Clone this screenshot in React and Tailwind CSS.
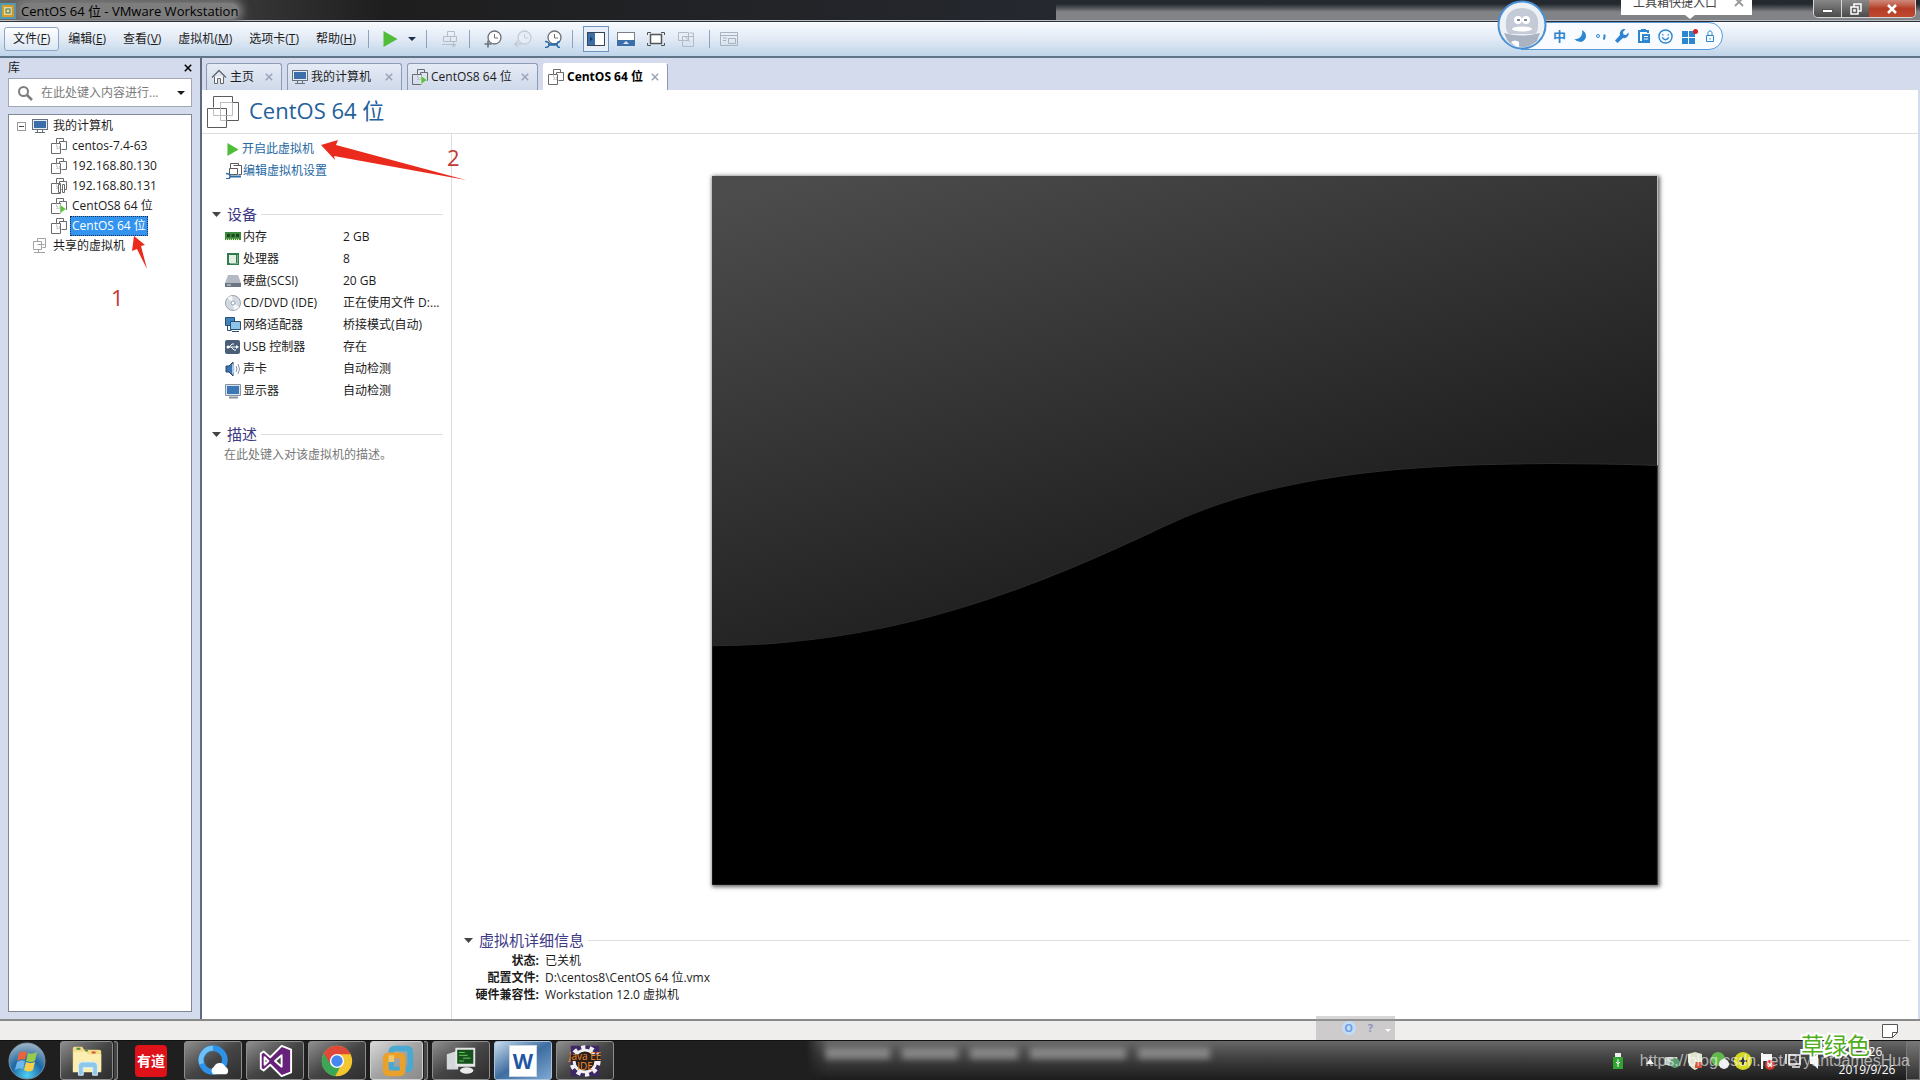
import React from 'react';

const MENUS = [
  { label: '文件', key: 'F', active: true },
  { label: '编辑', key: 'E' },
  { label: '查看', key: 'V' },
  { label: '虚拟机', key: 'M' },
  { label: '选项卡', key: 'T' },
  { label: '帮助', key: 'H' },
];

const MACHINES = [
  { name: 'centos-7.4-63', state: 'off' },
  { name: '192.168.80.130', state: 'off' },
  { name: '192.168.80.131', state: 'paused' },
  { name: 'CentOS8 64 位', state: 'on' },
  { name: 'CentOS 64 位', state: 'off', selected: true },
];

const DEVICES = [
  { icon: 'memory', name: '内存', value: '2 GB' },
  { icon: 'cpu', name: '处理器', value: '8' },
  { icon: 'disk', name: '硬盘(SCSI)', value: '20 GB' },
  { icon: 'cd', name: 'CD/DVD (IDE)', value: '正在使用文件 D:...' },
  { icon: 'network', name: '网络适配器', value: '桥接模式(自动)' },
  { icon: 'usb', name: 'USB 控制器', value: '存在' },
  { icon: 'sound', name: '声卡', value: '自动检测' },
  { icon: 'display', name: '显示器', value: '自动检测' },
];

const DETAILS = [
  ['状态:', '已关机'],
  ['配置文件:', 'D:\\centos8\\CentOS 64 位.vmx'],
  ['硬件兼容性:', 'Workstation 12.0 虚拟机'],
];

/* ---------- icons ---------- */

function VmIcon({ state = 'off', className = 'size-4' }) {
  return (
    <svg viewBox="0 0 16 16" className={`shrink-0 ${className}`} fill="none" stroke="#6b6b6b">
      <path d="M5.500 5.500v-5h7v3" />
      <path d="M8.500 3.500h7v8h-5" />
      <path d="M8.500 3.500v2" />
      <path d="M.5 5.500h9v10h-9z" />
      <path d="M5.500 5.500v3.500h4M5.500 10.500h4" stroke="#a5a5a5" strokeDasharray="1 1" />
      {state === 'on' && <path d="M9 6.500 15 11l-6 4.500z" fill="#5cc040" stroke="#fff" strokeWidth=".5" />}
      {state === 'paused' && <path d="M7.500 6.500h2v8h-2zM11.500 6.500h2v8h-2z" fill="#fff" />}
    </svg>
  );
}

function VmOutline({ className = 'size-4', color = '#5b5b5b' }) {
  return (
    <svg viewBox="0 0 32 32" className={`shrink-0 ${className}`} fill="none" stroke={color}>
      <path d="M6.500 11.500V.5h19v6" />
      <path d="M13.500 6.500h18v18h-12" />
      <path d="M.5 12.500h19v19H.5z" />
      <path d="M6.500 12.500v7h13M13.500 6.500v18h6M13.500 6.500h12v13h-6" stroke="#bdbdbd" />
    </svg>
  );
}

function MonitorIcon({ className = 'size-4' }) {
  return (
    <svg viewBox="0 0 16 16" className={`shrink-0 ${className}`}>
      <rect x=".5" y="1.500" width="15" height="10" fill="#e8edf3" stroke="#66717d" />
      <rect x="2" y="3" width="12" height="7" fill="#3c6ea9" />
      <path d="M5 12h1v2H5zM10 12h1v2h-1zM3 14h10v1H3z" fill="#66717d" />
    </svg>
  );
}

function SharedIcon() {
  return (
    <svg viewBox="0 0 16 16" className="size-4 shrink-0" fill="none" stroke="#a2a2a2">
      <path d="M5.500 3.500v-3h8v9h-3M1.500 3.500h8v8h-8zM5.500 6.500h7M6.500 11.500v3M2 14.500h11" />
    </svg>
  );
}

function HomeIcon() {
  return (
    <svg viewBox="0 0 16 16" className="size-4 shrink-0" fill="#f6f8fb" stroke="#666">
      <path d="M3.500 7.500v7h3v-5h3v5h3v-7" />
      <path d="M1 8.500 8 1.500l7 7" fill="none" strokeWidth="1.400" />
    </svg>
  );
}

function CloseX({ className = 'size-2' }) {
  return (
    <svg viewBox="0 0 8 8" className={`shrink-0 ${className}`} fill="none" stroke="currentColor" strokeWidth="1.500">
      <path d="m.8.8 6.400 6.400M7.200.8.8 7.200" />
    </svg>
  );
}

function Caret({ className = 'h-1 w-2' }) {
  return (
    <svg viewBox="0 0 8 4" preserveAspectRatio="none" className={`shrink-0 ${className}`} fill="currentColor">
      <path d="M0 0h8L4 4z" />
    </svg>
  );
}

function ClockIcon({ kind }) {
  const faded = kind === 'back';
  const ink = faded ? '#c3cbd6' : '#6c7178';
  return (
    <svg viewBox="0 0 18 18" className="size-[18px]" fill="none" stroke={ink}>
      <circle cx="10.500" cy="7.500" r="6.500" fill={faded ? '#e6edf6' : '#fff'} strokeWidth="1.300" />
      <path d="M10.500 4v4h3.500" />
      {kind === 'add' && <path d="M.5 14h7M4 10.500v7" stroke="#6c7178" strokeWidth="1.600" />}
      {kind === 'back' && <path d="M8 14H1.500M4 11l-3 3 3 3" strokeWidth="1.600" />}
      {kind === 'manage' && (
        <g stroke="#2f6da6">
          <path d="M4 14.500h9" strokeWidth="2.500" />
          <path d="M1 11.500q4 0 4 3t-4 3M16 11.500q-3 0-3 3t3 3" strokeWidth="1.500" />
        </g>
      )}
    </svg>
  );
}

function ToolIcon({ name }) {
  const icons = {
    send: (
      <g stroke="#b7bdc6" fill="none">
        <path d="M6.500 6.500v-5h7v5M2.500 6.500h7v5h-7zM9.500 6.500h6v5h-6zM1 14.500h14M12.500 12v5M10.500 15l2 2 2-2" />
      </g>
    ),
    library: (
      <g>
        <rect x=".5" y="2.500" width="17" height="13" fill="#fff" stroke="#3a4550" />
        <path d="M1 3h7v12H1z" fill="#3c6ea9" />
        <path d="M3 6.500v5L6 9z" fill="#163b66" />
      </g>
    ),
    thumbs: (
      <g>
        <rect x=".5" y="2.500" width="17" height="13" fill="#fff" stroke="#77818c" />
        <path d="M0 10h18v6H0z" fill="#3c6ea9" />
        <path d="M6 14h6l-3-3z" fill="#dce8f5" />
      </g>
    ),
    full: (
      <g fill="none" stroke="#555">
        <path d="M3.500 4.500h11v9h-11z" fill="#fff" strokeWidth="1.500" />
        <path d="M.5 5V2.500H4M14 2.500h3.500V5M17.500 13v2.500H14M4 15.500H.5V13" />
      </g>
    ),
    unity: (
      <g fill="none" stroke="#b3bac4">
        <path d="M1.500 2.500h10v8h-10zM5.500 6.500h11v10h-11zM8 6l5 6M12.500 3h4v4" />
      </g>
    ),
    console: (
      <g fill="none" stroke="#a9b1bc">
        <path d="M.5 2.500h17v13H.5zM.5 5.500h17M3 8h4M3 10.500h3M8.500 8.500h7v5h-7z" />
      </g>
    ),
  };
  return (
    <svg viewBox="0 0 18 18" className="size-[18px]">
      {icons[name]}
    </svg>
  );
}

function DeviceIcon({ name }) {
  const icons = {
    memory: (
      <g>
        <path d="M0 3h16v8H0z" fill="#3c8a3e" />
        <path d="M2 5h3v3H2zM6.500 5h3v3h-3zM11 5h3v3h-3z" fill="#1d4420" />
        <path d="M1 10.500h14" stroke="#d9e5a0" strokeWidth="1.500" strokeDasharray="1 1" />
      </g>
    ),
    cpu: (
      <g>
        <path d="M2 2h12v12H2z" fill="#2f7d4d" />
        <path d="M4 4h7v8H4z" fill="#e3eee5" />
        <path d="M11 4h1v8H5v1h8V4z" fill="#7fb18d" />
      </g>
    ),
    disk: (
      <g>
        <path d="M3 2h10l3 8H0z" fill="#b3bac4" />
        <path d="M0 10h16v4H0z" fill="#6c7683" />
        <path d="M2 12h4" stroke="#dbe1e9" />
      </g>
    ),
    cd: (
      <g>
        <circle cx="8" cy="8" r="7.500" fill="#d3dae2" stroke="#98a3b0" />
        <path d="M8 8 2.500 3A7 7 0 0 1 7 1zM8 8l6 4a7 7 0 0 1-5 3z" fill="#f7f9fb" />
        <circle cx="8" cy="8" r="2" fill="#fff" stroke="#98a3b0" />
      </g>
    ),
    network: (
      <g>
        <path d="M.5.5h9v8h-9z" fill="#3f83bd" stroke="#2a4f74" />
        <path d="M5.500 4.500h10v8h-10z" fill="#8fc5e8" stroke="#2a4f74" />
        <path d="M7 14.500h7M2.500 9v4.500h4" stroke="#2a4f74" fill="none" />
      </g>
    ),
    usb: (
      <g>
        <rect x="0" y="1" width="15" height="14" rx="2" fill="#4a5e78" />
        <path d="M2 8h10M4 8l3-3h2M6 8l3 3h2" stroke="#fff" fill="none" />
        <circle cx="3" cy="8" r="1.500" fill="#fff" />
        <path d="m11 6 3 2-3 2z" fill="#fff" />
      </g>
    ),
    sound: (
      <g>
        <path d="M1 5h3l4-4v14l-4-4H1z" fill="#3c73ae" stroke="#27486c" />
        <path d="M7 2q5 6 0 12z" fill="#a9c9e6" />
        <path d="M11 5q2 3 0 6M13 3q3 5 0 10" stroke="#8596a8" fill="none" />
      </g>
    ),
    display: (
      <g>
        <path d="M.5 1.500h15v11H.5z" fill="#dbe2ea" stroke="#8592a1" />
        <path d="M2 3h12v8H2z" fill="#3c78b8" />
        <path d="M4 14.500h9" stroke="#8592a1" strokeWidth="2" />
      </g>
    ),
  };
  return (
    <svg viewBox="0 0 16 16" className="size-4 shrink-0">
      {icons[name]}
    </svg>
  );
}

function AppIcon({ name }) {
  const icons = {
    explorer: (
      <g>
        <path d="M4 6q0-2 2-2h8l2 3h16q2 0 2 2v20H4z" fill="#f3dc84" />
        <path d="M5 9h13l2 3h14v19H4z" fill="#fbeeb0" />
        <path d="M8 5h4v2H8zM17 7h3v2h-3z" fill="#4f8c4a" />
        <path d="M24 9h4v2h-4z" fill="#c8523c" />
        <path d="M10 34V24q0-4 4-4h12q4 0 4 4v10h-5v-8H15v8z" fill="#8fc7ea" stroke="#d8effb" />
      </g>
    ),
    browser: (
      <g>
        <circle cx="19" cy="18" r="12.500" fill="none" stroke="#2e93e8" strokeWidth="6" />
        <path d="M7 22A12.500 12.500 0 0 1 19 5.500" fill="none" stroke="#6fc0f5" strokeWidth="5" />
        <path d="M19 33a5 5 0 0 1 1-8 6.500 6.500 0 0 1 12 0 4.500 4.500 0 0 1 1 8z" fill="#fff" />
      </g>
    ),
    vs: (
      <path
        d="M26 3 36 7v24l-10 4-12-12-7 6-3-2V11l3-2 7 6zM8 15v8l4-4zM26 13l-7 6 7 6z"
        fill="#68217a"
        stroke="#fff"
        strokeWidth="2"
        strokeLinejoin="round"
      />
    ),
    chrome: (
      <g>
        <circle cx="19" cy="19" r="16" fill="#f4c62f" />
        <path d="M19 19 5.100 11A16 16 0 0 0 17 35l6-11z" fill="#3aa757" />
        <path d="M19 12h14.400A16 16 0 0 0 5.100 11L12.500 23z" fill="#e0483a" />
        <circle cx="19" cy="19" r="7.500" fill="#fff" />
        <circle cx="19" cy="19" r="6" fill="#4688ef" />
      </g>
    ),
    vmware: (
      <g fill="none" strokeWidth="6">
        <rect x="13" y="6" width="20" height="22" rx="3" stroke="#49a9d0" />
        <rect x="7" y="13" width="18" height="19" rx="3" stroke="#e9a12c" />
        <path d="M13 20v-7" stroke="#f6c566" />
      </g>
    ),
    terminal: (
      <g>
        <path d="M4 12 16 8v20H4z" fill="#d5d8da" />
        <path d="M13 5h21v20H13z" fill="#e4e6e5" />
        <path d="M15 7h17v15H15z" fill="#16501d" />
        <path d="M17 10h6M17 13h9M21 16h8M17 19h5" stroke="#68d35f" />
        <ellipse cx="25" cy="29" rx="7" ry="3.500" fill="#e9eaea" />
      </g>
    ),
    eclipse: (
      <g>
        <path d="M4 3h30v32H4z" fill="#3d2865" />
        <circle cx="19" cy="19" r="11.500" fill="#2a211f" stroke="#f1f1f1" strokeWidth="3" />
        <circle cx="19" cy="19" r="14.500" fill="none" stroke="#f1f1f1" strokeWidth="4" strokeDasharray="4.500 4.610" />
        <path d="M3 12h32v7H3z" fill="#2a211f" />
      </g>
    ),
  };
  return (
    <svg viewBox="0 0 38 38" className="size-[36px]">
      {icons[name]}
    </svg>
  );
}

/* ---------- window chrome ---------- */

function TitleBar() {
  return (
    <header className="flex h-[21px] shrink-0 items-start justify-between border-b border-[#b9bdc4] bg-linear-to-r from-[#666] via-[#1e1e1e] via-20% to-[#25282f] to-55%">
      <div className="flex h-5 items-center gap-1 pt-px text-black">
        <svg viewBox="0 0 16 16" className="size-4" fill="none" strokeWidth="2">
          <rect x="1" y="1" width="14" height="14" stroke="#4f9db5" />
          <rect x="3" y="3" width="10" height="10" fill="#e7d9a0" stroke="#d99c2b" />
          <rect x="6" y="6" width="4" height="4" stroke="#3f7f4f" strokeWidth="1" />
        </svg>
        <h1 className="rounded-full bg-[#7d7d7d] px-px text-[13px] leading-4 shadow-[0_0_8px_4px_#7d7d7d]">
          CentOS 64 位 - VMware Workstation
        </h1>
      </div>
      <div className="flex h-5 w-[45%] justify-end bg-linear-to-b from-[#23292e] from-20% to-[#828387] to-60% pr-1">
        <div className="flex h-[18px] overflow-hidden rounded-b-[5px] border border-t-0 border-[#d6d6d6]">
          <button type="button" aria-label="最小化" className="flex w-7 items-center justify-center border-r border-[#d6d6d6] bg-linear-to-b from-[#888] to-[#4b4b4b]">
            <span className="mt-1 h-1 w-[11px] border border-[#555] bg-white" />
          </button>
          <button type="button" aria-label="还原" className="flex w-[27px] items-center justify-center bg-linear-to-b from-[#888] to-[#4b4b4b]">
            <svg viewBox="0 0 12 12" className="size-3" fill="none" stroke="#fff" strokeWidth="1.500">
              <path d="M4 3.500V1h7v7H8.500M1 4h7v7H1zM4 7h1v1H4z" />
            </svg>
          </button>
          <button type="button" aria-label="关闭" className="flex w-[46px] items-center justify-center bg-linear-to-b from-[#cf8a7c] via-[#b53c25] to-[#c04a30] text-white">
            <svg viewBox="0 0 12 12" className="size-3" stroke="#fff" strokeWidth="2.500">
              <path d="m2 2 8 8M10 2l-8 8" />
            </svg>
          </button>
        </div>
      </div>
    </header>
  );
}

function Separator({ className }) {
  return <span className={`h-[18px] w-px bg-[#8ba3c0] ${className}`} />;
}

function ToolButton({ label, active, children }) {
  return (
    <button
      type="button"
      aria-label={label}
      className={`mx-0.5 flex h-[26px] w-[26px] items-center justify-center ${active ? 'border border-[#6f93bf] bg-[#e6effa]' : ''}`}
    >
      {children}
    </button>
  );
}

function MenuBar() {
  return (
    <nav className="flex h-[37px] shrink-0 items-center border-t border-b-2 border-t-[#2c3038] border-b-[#5f7487] bg-linear-to-b from-[#f8fbff] via-[#e2eaf5] to-[#bfd5e9] pl-1">
      <div className="flex gap-px">
        {MENUS.map((menu) => (
          <button
            key={menu.label}
            type="button"
            className={`flex h-6 items-center px-2 ${menu.active ? 'rounded-[3px] border border-[#8ba6c9] bg-linear-to-b from-white to-[#dbe6f3]' : ''}`}
          >
            {menu.label}(<u>{menu.key}</u>)
          </button>
        ))}
      </div>
      <Separator className="ml-1" />
      <button type="button" aria-label="启动" className="ml-3.5 flex items-center">
        <svg viewBox="0 0 14 16" className="h-4 w-[15px]">
          <path d="M0 0v16l14-8z" fill="#4fbd38" />
        </svg>
      </button>
      <button type="button" aria-label="电源选项" className="ml-2.5 text-[#1c2f52]">
        <Caret />
      </button>
      <Separator className="mr-2 ml-2.5" />
      <ToolButton label="发送 Ctrl+Alt+Del"><ToolIcon name="send" /></ToolButton>
      <Separator className="mr-2 ml-1" />
      <ToolButton label="拍摄快照"><ClockIcon kind="add" /></ToolButton>
      <ToolButton label="恢复快照"><ClockIcon kind="back" /></ToolButton>
      <ToolButton label="管理快照"><ClockIcon kind="manage" /></ToolButton>
      <Separator className="mr-2 ml-1" />
      <ToolButton label="显示库" active><ToolIcon name="library" /></ToolButton>
      <ToolButton label="缩略图栏"><ToolIcon name="thumbs" /></ToolButton>
      <ToolButton label="全屏"><ToolIcon name="full" /></ToolButton>
      <ToolButton label="Unity"><ToolIcon name="unity" /></ToolButton>
      <Separator className="mr-1 ml-2" />
      <ToolButton label="控制台视图"><ToolIcon name="console" /></ToolButton>
    </nav>
  );
}

/* ---------- library ---------- */

function Library() {
  return (
    <aside className="flex w-[202px] shrink-0 flex-col border-r-2 border-[#5d6b80] bg-[#d3dbec] pr-2 pb-[7px] pl-2">
      <div className="flex h-5 items-center justify-between">
        <h2>库</h2>
        <button type="button" aria-label="关闭库" className="text-black">
          <CloseX />
        </button>
      </div>
      <div className="flex h-[29px] items-center gap-2 border border-[#a0a7b5] bg-white pr-1.5 pl-2">
        <svg viewBox="0 0 16 16" className="size-4 shrink-0" fill="none" stroke="#7d7d7d">
          <circle cx="6.500" cy="6.500" r="4.500" strokeWidth="2" />
          <path d="m10 10 5 5" strokeWidth="2.500" />
        </svg>
        <input
          type="text"
          aria-label="搜索库"
          placeholder="在此处键入内容进行..."
          className="min-w-0 flex-1 bg-transparent outline-none placeholder:text-[#7b7b7b]"
        />
        <button type="button" aria-label="搜索选项">
          <Caret />
        </button>
      </div>
      <div className="mt-[7px] flex-1 border border-[#7f8897] bg-white pt-px">
        <div className="flex h-5 items-center pl-2">
          <button type="button" aria-label="折叠" className="mr-1.5 flex size-[9px] items-center justify-center border border-[#999]">
            <span className="h-px w-[5px] bg-[#444]" />
          </button>
          <MonitorIcon />
          <span className="ml-[5px]">我的计算机</span>
        </div>
        <ul>
          {MACHINES.map((machine) => (
            <li key={machine.name} className="flex h-5 items-center gap-[3px] pl-[42px]">
              <VmIcon state={machine.state} />
              <button
                type="button"
                className={`h-5 border px-px ${machine.selected ? 'border-dotted border-[#16304f] bg-[#3394f0] text-white' : 'border-transparent'}`}
              >
                {machine.name}
              </button>
            </li>
          ))}
        </ul>
        <div className="flex h-5 items-center gap-[5px] pl-[23px]">
          <SharedIcon />
          <span>共享的虚拟机</span>
        </div>
      </div>
    </aside>
  );
}

/* ---------- main area ---------- */

function Tab({ icon, label, width, active }) {
  return (
    <div
      className={`flex h-[27px] items-center rounded-t-[3px] border border-b-0 pr-2 pl-1 ${width} ${
        active ? 'border-white border-r-[#8c9ab5] bg-white font-bold text-black' : 'border-[#8c9ab5] bg-linear-to-b from-[#e6ecf6] to-[#cfd9ea]'
      }`}
    >
      <button type="button" role="tab" aria-selected={!!active} className="flex flex-1 items-center gap-[3px] whitespace-nowrap">
        {icon}
        {label}
      </button>
      <button type="button" aria-label={`关闭 ${label}`} className="text-[#98a4b6]">
        <CloseX />
      </button>
    </div>
  );
}

function SectionTitle({ children }) {
  return (
    <div className="flex h-5 items-center">
      <span className="mr-1.5 flex text-[#444]">
        <Caret className="h-[5px] w-[9px]" />
      </span>
      <h3 className="text-[15px] leading-5 text-[#3e3a86]">{children}</h3>
      <span className="ml-1 h-px flex-1 bg-[#dedede]" />
    </div>
  );
}

function Summary() {
  return (
    <section className="w-[250px] shrink-0 border-r border-[#dcdcdc] pr-2">
      <div className="flex flex-col pt-1 pl-6 text-[#2468a4]">
        <a href="#start" className="flex h-[22px] items-center gap-[3px]">
          <svg viewBox="0 0 12 14" className="ml-px h-[13px] w-3">
            <path d="M0 0v14l12-7z" fill="#4fbd38" />
          </svg>
          开启此虚拟机
        </a>
        <a href="#settings" className="flex h-[21px] items-center gap-px">
          <svg viewBox="0 0 16 16" className="size-4" fill="none" stroke="#5b5b5b">
            <path d="M4.500 5V.5h8v2M7.500 2.500h8v9h-3M3.500 5.500h8v6h-8z" />
            <path d="M4 13.500h11" stroke="#2f6da6" strokeWidth="2" />
            <path d="M0 10.500q4 0 4 3t-4 2" stroke="#2f6da6" strokeWidth="1.500" />
          </svg>
          编辑虚拟机设置
        </a>
      </div>
      <div className="pt-[23px] pl-[10px]">
        <SectionTitle>设备</SectionTitle>
        <table className="ml-[13px] mt-0.5">
          <tbody>
            {DEVICES.map((device) => (
              <tr key={device.name} className="h-[22px]">
                <td className="w-[118px] p-0">
                  <div className="flex items-center gap-0.5 whitespace-nowrap">
                    <DeviceIcon name={device.icon} />
                    {device.name}
                  </div>
                </td>
                <td className="p-0 whitespace-nowrap">{device.value}</td>
              </tr>
            ))}
          </tbody>
        </table>
        <div className="h-[22px]" />
        <SectionTitle>描述</SectionTitle>
        <p className="pl-3 leading-[22px] text-[#777]">在此处键入对该虚拟机的描述。</p>
      </div>
    </section>
  );
}

function ConsolePreview() {
  return (
    <div className="flex min-h-0 flex-1 items-center justify-center pt-[42px] pb-[45px]">
      <svg viewBox="0 0 944 708" className="aspect-[944/708] h-full shadow-[1px_1px_4px_1px_rgba(0,0,0,0.6)]">
        <defs>
          <linearGradient id="sheen" x1="0.1" y1="0" x2="0.35" y2="0.62">
            <stop offset="0" stopColor="#4c4c4c" />
            <stop offset="1" stopColor="#1f1f1f" />
          </linearGradient>
        </defs>
        <rect width="944" height="708" fill="url(#sheen)" />
        <path d="M0 469C180 469 320 412 451 350 560 298 700 281 944 289V708H0z" fill="#000" stroke="#2c2c2c" />
      </svg>
    </div>
  );
}

function Workspace() {
  return (
    <main className="flex min-w-0 flex-1 flex-col bg-white">
      <div role="tablist" className="flex h-8 shrink-0 items-end gap-[5px] bg-[#d3dbec] pl-1">
        <Tab width="w-[76px]" icon={<HomeIcon />} label="主页" />
        <Tab width="w-[115px]" icon={<MonitorIcon />} label="我的计算机" />
        <Tab width="w-[131px]" icon={<VmIcon state="on" />} label="CentOS8 64 位" />
        <Tab width="w-[125px]" icon={<VmIcon />} label="CentOS 64 位" active />
      </div>
      <div className="flex h-11 shrink-0 items-center gap-[10px] border-b border-[#dcdcdc] pl-[5px]">
        <VmOutline className="size-8" />
        <h2 className="pb-1 text-[22px] text-[#24609a]">CentOS 64 位</h2>
      </div>
      <div className="flex min-h-0 flex-1">
        <Summary />
        <section className="flex min-w-0 flex-1 flex-col">
          <ConsolePreview />
          <div className="pr-2 pb-4 pl-3">
            <SectionTitle>虚拟机详细信息</SectionTitle>
            <dl className="mt-0.5 grid grid-cols-[75px_1fr] gap-x-1.5 leading-[17px]">
              {DETAILS.map(([term, value]) => (
                <React.Fragment key={term}>
                  <dt className="text-right font-bold">{term}</dt>
                  <dd>{value}</dd>
                </React.Fragment>
              ))}
            </dl>
          </div>
        </section>
      </div>
    </main>
  );
}

function StatusBar() {
  return (
    <footer className="flex h-[21px] shrink-0 items-center justify-end border-t-2 border-[#8a8a8a] bg-[#f0eded] pr-[22px]">
      <svg viewBox="0 0 16 14" className="h-[14px] w-4" fill="#fff" stroke="#555">
        <path d="M.5.5h15v8l-5 5H.5zM10.500 13.500v-5h5" />
      </svg>
    </footer>
  );
}

/* ---------- desktop ---------- */

function TaskButton({ label, tone = 'dark', stacked, children }) {
  const tones = {
    dark: 'border-[#8d8d8d] from-[#8f8f8f] via-[#454545] to-[#2e2e2e]',
    light: 'border-[#d0d0d0] from-[#d8d8d8] via-[#a3a3a3] to-[#8b8b8b]',
    blue: 'border-[#a9c4e0] from-[#c9dcec] via-[#3f6da0] to-[#7fa9d3]',
    plain: 'border-transparent',
  };
  return (
    <div className="flex h-[39px] w-[58px] gap-px">
      <button
        type="button"
        aria-label={label}
        className={`flex min-w-0 flex-1 items-center justify-center overflow-hidden rounded-[3px] border bg-linear-to-br ${tones[tone]}`}
      >
        {children}
      </button>
      {stacked && <span className="w-1 rounded-r-[3px] border border-l-0 border-[#8d8d8d] bg-[#444]" />}
    </div>
  );
}

function StartOrb() {
  return (
    <button type="button" aria-label="开始" className="mr-[10px] ml-2 size-[38px]">
      <svg viewBox="0 0 38 38">
        <defs>
          <radialGradient id="orb" cx=".5" cy=".9" r=".9">
            <stop offset="0" stopColor="#4fd0f5" />
            <stop offset=".5" stopColor="#1b68a5" />
            <stop offset="1" stopColor="#a3b6c4" />
          </radialGradient>
        </defs>
        <circle cx="19" cy="19" r="18" fill="url(#orb)" stroke="#7792a5" />
        <path d="M11 11q4-3 8-1l-2 8q-4-2-8 1z" fill="#e8643b" />
        <path d="M20 11q4 2 9-1l-2 9q-4 2-9 0z" fill="#9aca4b" />
        <path d="M9 20q4-3 8-1l-2 8q-4-2-8 1z" fill="#6fb7ea" />
        <path d="M18 20q4 2 9 0l-2 8q-4 3-9 0z" fill="#f9cf4a" />
      </svg>
    </button>
  );
}

function Tray() {
  return (
    <div className="flex h-full items-center">
      <svg viewBox="0 0 10 16" className="mr-[22px] h-4 w-[10px]">
        <path d="M2 0h6v4H2z" fill="#eee" />
        <path d="M0 4h10v12H0z" fill="#2fa52f" />
        <path d="M5 6v8M3 9l2 2 2-2" stroke="#fff" fill="none" />
      </svg>
      <svg viewBox="0 0 190 20" className="h-5 w-[190px]">
        <path d="M1 13h8L5 8z" fill="#eee" />
        <path d="M20 6h12v8H20z" fill="#b9c4bd" />
        <circle cx="30" cy="12" r="5" fill="#5b9b72" />
        <path d="M43 3l7-2 7 2v8q-2 6-7 8-5-2-7-8z" fill="#dfe5cf" />
        <path d="M50 11h7v6h-7z" fill="#d2523c" />
        <circle cx="73" cy="8" r="7" fill="#63b84c" />
        <circle cx="79" cy="13" r="5" fill="#eee" />
        <circle cx="98" cy="10" r="9" fill="#d5d823" />
        <path d="M94 10h8M98 6v8" stroke="#333" strokeWidth="2" />
        <path d="M116 2h2v16h-2zM118 3h9v7h-9z" fill="#f4f4f4" />
        <circle cx="125" cy="14" r="5" fill="#cf3528" />
        <path d="m123 12 4 4M127 12l-4 4" stroke="#fff" strokeWidth="1.500" />
        <path d="M144 4h11v9h-11zM147 16h8M141 3v10" stroke="#f2f2f2" strokeWidth="1.500" fill="none" />
        <path d="M165 7h3l5-5v16l-5-5h-3z" fill="#f4f4f4" />
      </svg>
      <div className="w-[64px] text-center leading-[18px] text-white">
        <div>17:26</div>
        <div>2019/9/26</div>
      </div>
      <button type="button" aria-label="显示桌面" className="ml-[7px] h-full w-[14px] border border-[#777] bg-linear-to-b from-[#777] to-[#333]" />
    </div>
  );
}

function Taskbar() {
  return (
    <div className="relative flex h-10 shrink-0 items-center justify-between overflow-hidden border-t border-[#111] bg-[#1f1f1f]">
      {/* glass effect: blurred outline of the window behind */}
      <div className="absolute inset-y-0 right-0 left-[42%] bg-linear-to-b from-[#686868] via-[#3c3c3c] to-[#1c1c1c] mask-l-from-98%" />
      <div className="absolute top-1.5 left-[43%] flex w-[20%] gap-3 blur-[3px]">
        <span className="h-3 w-16 bg-[#868686]" />
        <span className="h-3 w-14 bg-[#868686]" />
        <span className="h-3 w-12 bg-[#868686]" />
        <span className="h-3 w-24 bg-[#868686]" />
        <span className="h-3 flex-1 bg-[#868686]" />
      </div>
      <div className="relative flex items-center gap-1">
        <StartOrb />
        <div className="flex gap-1">
          <TaskButton label="资源管理器" stacked><AppIcon name="explorer" /></TaskButton>
          <TaskButton label="有道" tone="plain">
            <span className="flex h-8 w-8 items-center justify-center rounded-[4px] bg-[#df1219] text-[14px] font-bold text-white">有道</span>
          </TaskButton>
          <TaskButton label="浏览器"><AppIcon name="browser" /></TaskButton>
          <TaskButton label="Visual Studio"><AppIcon name="vs" /></TaskButton>
          <TaskButton label="Chrome"><AppIcon name="chrome" /></TaskButton>
          <TaskButton label="VMware" tone="light" stacked><AppIcon name="vmware" /></TaskButton>
          <TaskButton label="终端"><AppIcon name="terminal" /></TaskButton>
          <TaskButton label="Word" tone="blue">
            <span className="flex h-8 w-7 items-center justify-center border border-[#cfd9e6] bg-white text-[21px] font-bold text-[#1f57a4]">W</span>
          </TaskButton>
          <TaskButton label="Java EE IDE">
            <span className="grid place-items-center *:col-start-1 *:row-start-1">
              <AppIcon name="eclipse" />
              <span className="text-center text-[10px] leading-[10px] whitespace-nowrap text-[#f0892c]">
                Java EE
                <br />
                IDE
              </span>
            </span>
          </TaskButton>
        </div>
      </div>
      <div className="relative h-full">
        <Tray />
      </div>
    </div>
  );
}

function InputMethodBar() {
  return (
    <div className="absolute top-0 right-[197px] h-[50px] w-[226px] text-[#2f86d0]">
      <div className="absolute top-[22px] right-0 flex h-7 w-[202px] items-center justify-between rounded-r-full border border-[#5a9bd6] bg-[#f8fbff] pr-2 pl-[31px]">
        <span className="text-[13px] font-bold">中</span>
        <svg viewBox="0 0 12 12" className="size-3" fill="currentColor">
          <path d="M8 0a7 7 0 0 1-8 9q3 3 7 3 5-2 5-6T8 0z" />
        </svg>
        <svg viewBox="0 0 12 8" className="h-2 w-3" fill="none" stroke="currentColor">
          <circle cx="3" cy="4" r="1.500" />
          <path d="M9.500 2.500v2q0 2-1 3" strokeWidth="2" />
        </svg>
        <svg viewBox="0 0 14 14" className="size-[14px]" fill="currentColor">
          <path d="M13.500 3.500 11 6 8.500 5.500 8 3l2.500-2.700A4.500 4.500 0 0 0 5 6L0 11.500 2.500 14 8 9a4.500 4.500 0 0 0 5.500-5.500z" />
        </svg>
        <svg viewBox="0 0 12 14" className="h-[14px] w-3" fill="currentColor">
          <path d="M0 1h3V0h5v1h3v3H9V3H2v9h2v2H0z" />
          <path d="M4 5h8v9H4zM6 7v1h4V7zM6 9.500v1h4v-1z" fillRule="evenodd" />
        </svg>
        <svg viewBox="0 0 16 16" className="size-[15px]" fill="none" stroke="currentColor" strokeWidth="1.500">
          <circle cx="8" cy="8" r="7" />
          <path d="M4.500 9q3.500 5 7 0M5 5.500v1.500M11 5.500v1.500" />
        </svg>
        <svg viewBox="0 0 16 15" className="h-[15px] w-4" fill="currentColor">
          <path d="M0 2h6v6H0zM7 2h6v6H7zM0 9h6v6H0zM7 9h6v6H7z" />
          <circle cx="13.500" cy="2.500" r="2.500" fill="#d8202a" />
        </svg>
        <svg viewBox="0 0 8 12" className="h-3 w-2" fill="none" stroke="currentColor">
          <path d="M2 5.500V2.500q2-3.500 4 0v3M.5 5.500h7v6h-7zM4 8v1.500" />
        </svg>
      </div>
      <svg viewBox="0 0 50 50" className="absolute top-0 left-0 size-[50px]">
        <circle cx="25" cy="25" r="23.500" fill="#edf1f6" stroke="#4a90d6" strokeWidth="2" />
        <path d="M9 27q-2-18 16-19 18 1 16 19 0 5-3 7H12q-3-2-3-7z" fill="#c5cbd6" />
        <path d="M7 33q18 5 36 0l-3 8q-8 7-15 6-10 0-15-7z" fill="#aab3c2" />
        <path d="M14 42q4-3 8 0v5q-5-1-8-5z" fill="#fff" />
        <ellipse cx="21" cy="20" rx="4" ry="4" fill="#fff" />
        <ellipse cx="29" cy="20" rx="4" ry="4" fill="#fff" />
        <path d="M20 20h3M27 20h3" stroke="#7d8898" strokeWidth="2" />
        <ellipse cx="25" cy="29" rx="10" ry="2.500" fill="#fff" />
      </svg>
    </div>
  );
}

function ToolboxTip() {
  return (
    <div className="absolute top-0 right-[168px] w-[131px]">
      <div className="flex h-[15px] items-end justify-between overflow-hidden bg-white pr-2 pl-3 text-[#444]">
        <span className="pb-1">工具箱快捷入口</span>
        <button type="button" aria-label="关闭提示" className="pb-2 text-[#999]">
          <CloseX className="size-[10px]" />
        </button>
      </div>
      <span className="ml-16 flex text-white">
        <Caret className="h-1 w-[10px]" />
      </span>
    </div>
  );
}

function Annotations() {
  return (
    <div className="pointer-events-none absolute inset-0 text-[22px] leading-6 text-[#c23a33]">
      <svg viewBox="0 0 480 280" className="absolute top-0 left-0 h-[280px] w-[480px]" fill="#ea2a1c">
        <path d="m321 145 17-5-2 5 130 35-132-24 1 4z" />
        <path d="m134 236 11 9-4 1 6 23-10-20-5 2z" />
      </svg>
      <span className="absolute top-[285px] left-[111px]">1</span>
      <span className="absolute top-[145px] left-[447px]">2</span>
    </div>
  );
}

function Watermarks() {
  return (
    <div className="pointer-events-none absolute right-0 bottom-0">
      <span className="absolute right-[10px] bottom-[7px] font-['Liberation_Sans',sans-serif] text-[16px] leading-6 text-white/60">
        https://blog.csdn.net/BryantJamesHua
      </span>
      <span className="absolute right-[50px] bottom-[21px] text-[23px] leading-7 whitespace-nowrap text-[#4fae1c] [-webkit-text-stroke:4px_white] [paint-order:stroke_fill]">
        草绿色
      </span>
    </div>
  );
}

function LanguageBar() {
  return (
    <div className="absolute right-[525px] bottom-10 flex h-6 w-[79px] items-center justify-end gap-3 bg-[#999]/40 pr-1 text-[11px] font-bold text-[#8f8fc8]">
      <span className="flex size-[14px] items-center justify-center rounded-full bg-[#c4dbf8] text-[#6e9fe0]">O</span>
      <span>?</span>
      <span className="pt-1 text-white">
        <Caret className="h-[3px] w-1.5" />
      </span>
    </div>
  );
}

export default function App() {
  return (
    <div className="relative flex h-screen flex-col overflow-hidden bg-white font-['Open_Sans','Noto_Sans_CJK_SC',sans-serif] text-[12px] leading-4 text-[#1c1c1c]">
      <TitleBar />
      <MenuBar />
      <div className="flex min-h-0 flex-1 border-r-2 border-[#d3dbec]">
        <Library />
        <Workspace />
      </div>
      <StatusBar />
      <Taskbar />
      <ToolboxTip />
      <InputMethodBar />
      <LanguageBar />
      <Annotations />
      <Watermarks />
    </div>
  );
}
